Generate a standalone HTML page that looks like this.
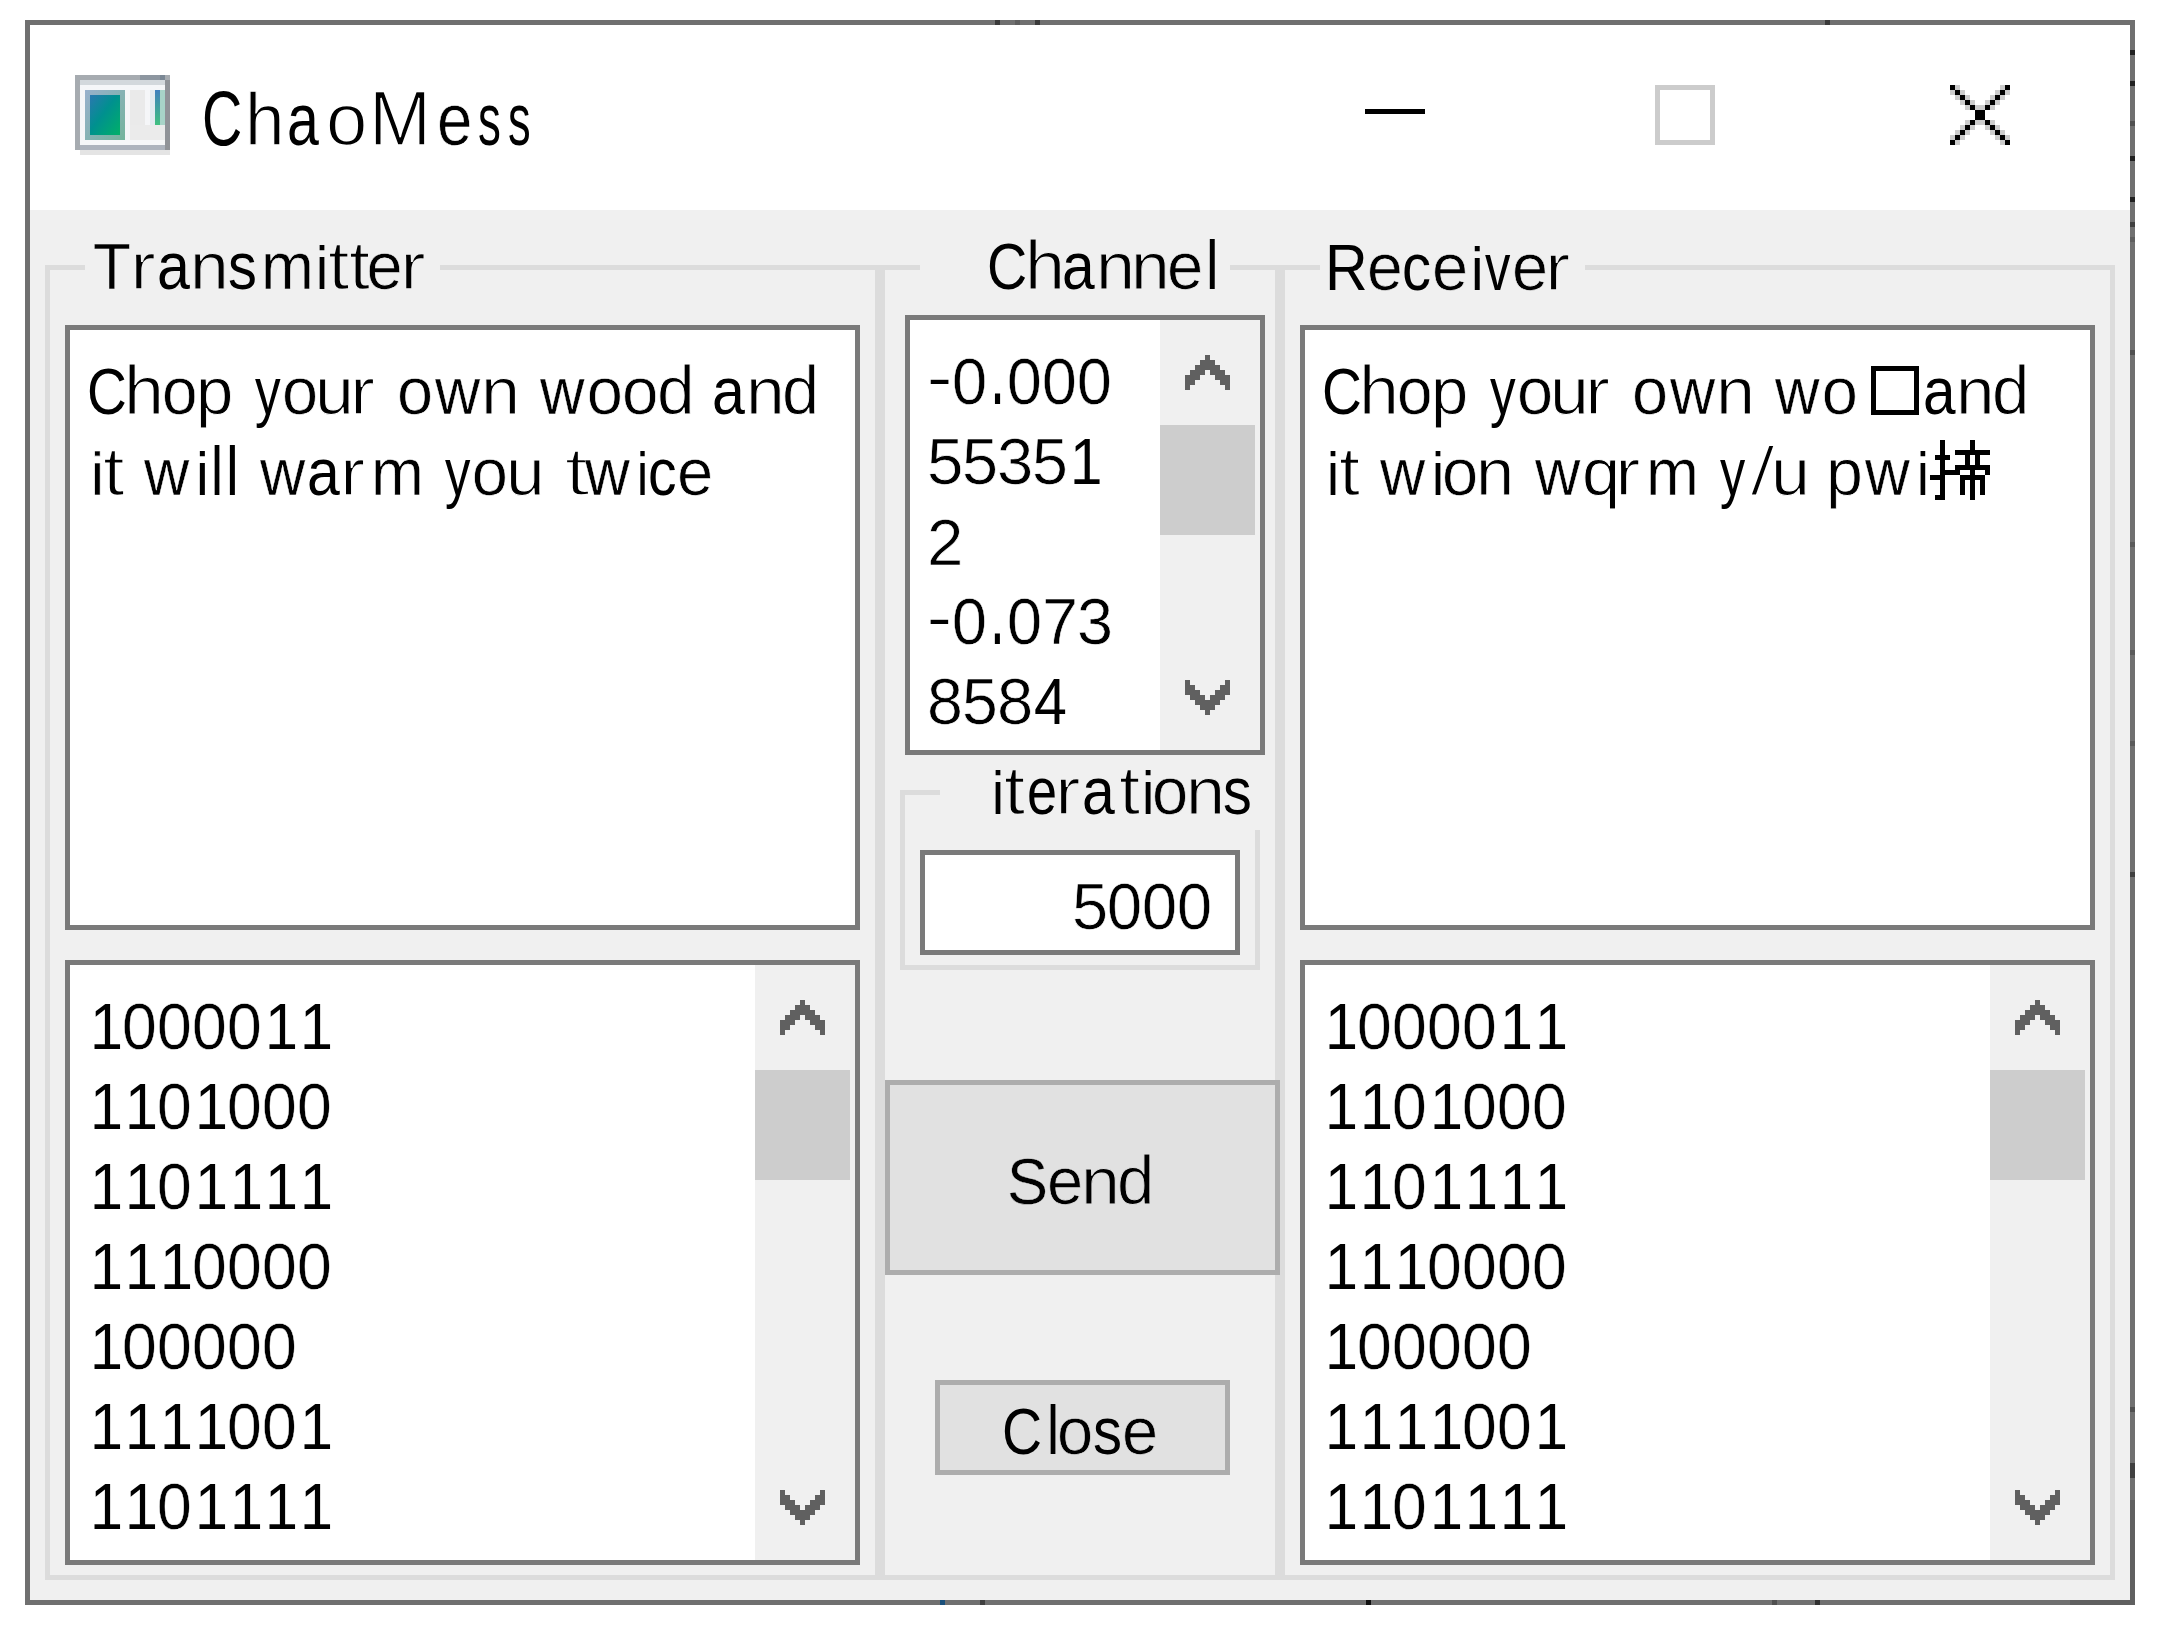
<!DOCTYPE html>
<html><head><meta charset="utf-8"><title>ChaoMess</title><style>
html,body{margin:0;padding:0;width:2159px;height:1626px;overflow:hidden;background:#fff;}
.a{position:absolute;box-sizing:border-box;}
svg.a{display:block}
.t,.g{position:absolute;white-space:pre;line-height:80px;font-family:"Liberation Sans",sans-serif;color:#000;font-style:normal;}
</style></head><body>
<div class="a" style="left:25px;top:20px;width:2110px;height:1585px;border:5px solid #707070;background:#ffffff"></div>
<div class="a" style="left:30px;top:210px;width:2100px;height:1390px;background:#f0f0f0;"></div>
<div class="a" style="left:2130px;top:50px;width:5px;height:5px;background:#202020;"></div>
<div class="a" style="left:2130px;top:81px;width:5px;height:5px;background:#202020;"></div>
<div class="a" style="left:2130px;top:121px;width:5px;height:5px;background:#505050;"></div>
<div class="a" style="left:2130px;top:156px;width:5px;height:5px;background:#202020;"></div>
<div class="a" style="left:2130px;top:197px;width:5px;height:5px;background:#202020;"></div>
<div class="a" style="left:2130px;top:222px;width:5px;height:5px;background:#404040;"></div>
<div class="a" style="left:2130px;top:237px;width:5px;height:5px;background:#5e5e5e;"></div>
<div class="a" style="left:2130px;top:350px;width:5px;height:5px;background:#505050;"></div>
<div class="a" style="left:2130px;top:542px;width:5px;height:5px;background:#5a5a5a;"></div>
<div class="a" style="left:2130px;top:650px;width:5px;height:5px;background:#5a5a5a;"></div>
<div class="a" style="left:2130px;top:741px;width:5px;height:5px;background:#5a5a5a;"></div>
<div class="a" style="left:2130px;top:872px;width:5px;height:5px;background:#404040;"></div>
<div class="a" style="left:2130px;top:1407px;width:5px;height:5px;background:#505050;"></div>
<div class="a" style="left:2130px;top:1463px;width:5px;height:15px;background:#404040;"></div>
<div class="a" style="left:2130px;top:1500px;width:5px;height:105px;background:#606060;"></div>
<div class="a" style="left:2070px;top:1600px;width:65px;height:5px;background:#606060;"></div>
<div class="a" style="left:940px;top:1600px;width:5px;height:5px;background:#1a4f7a;"></div>
<div class="a" style="left:980px;top:1600px;width:5px;height:5px;background:#404040;"></div>
<div class="a" style="left:1366px;top:1600px;width:5px;height:5px;background:#101010;"></div>
<div class="a" style="left:1772px;top:1600px;width:5px;height:5px;background:#505050;"></div>
<div class="a" style="left:1815px;top:1600px;width:5px;height:5px;background:#303030;"></div>
<div class="a" style="left:995px;top:20px;width:5px;height:5px;background:#3a3a3a;"></div>
<div class="a" style="left:1015px;top:20px;width:5px;height:5px;background:#5e5e5e;"></div>
<div class="a" style="left:1035px;top:20px;width:5px;height:5px;background:#3a3a3a;"></div>
<div class="a" style="left:1825px;top:20px;width:5px;height:5px;background:#3a3a3a;"></div>
<div class="a" style="left:1365px;top:109px;width:60px;height:5px;background:#000;"></div>
<div class="a" style="left:1655px;top:85px;width:60px;height:60px;border:5px solid #cccccc;background:transparent"></div>
<svg class="a" style="left:1950px;top:85px" width="60" height="60" viewBox="0 0 12 12" shape-rendering="crispEdges"><rect x="0" y="0" width="1" height="1" fill="#000"/><rect x="1" y="0" width="1" height="1" fill="#cccccc"/><rect x="10" y="0" width="1" height="1" fill="#cccccc"/><rect x="11" y="0" width="1" height="1" fill="#000"/><rect x="0" y="1" width="1" height="1" fill="#cccccc"/><rect x="1" y="1" width="1" height="1" fill="#000"/><rect x="2" y="1" width="1" height="1" fill="#cccccc"/><rect x="9" y="1" width="1" height="1" fill="#cccccc"/><rect x="10" y="1" width="1" height="1" fill="#000"/><rect x="11" y="1" width="1" height="1" fill="#cccccc"/><rect x="1" y="2" width="1" height="1" fill="#cccccc"/><rect x="2" y="2" width="1" height="1" fill="#000"/><rect x="3" y="2" width="1" height="1" fill="#cccccc"/><rect x="8" y="2" width="1" height="1" fill="#cccccc"/><rect x="9" y="2" width="1" height="1" fill="#000"/><rect x="10" y="2" width="1" height="1" fill="#cccccc"/><rect x="2" y="3" width="1" height="1" fill="#cccccc"/><rect x="3" y="3" width="1" height="1" fill="#000"/><rect x="4" y="3" width="1" height="1" fill="#cccccc"/><rect x="7" y="3" width="1" height="1" fill="#cccccc"/><rect x="8" y="3" width="1" height="1" fill="#000"/><rect x="9" y="3" width="1" height="1" fill="#cccccc"/><rect x="3" y="4" width="1" height="1" fill="#cccccc"/><rect x="4" y="4" width="1" height="1" fill="#000"/><rect x="5" y="4" width="2" height="1" fill="#cccccc"/><rect x="7" y="4" width="1" height="1" fill="#000"/><rect x="8" y="4" width="1" height="1" fill="#cccccc"/><rect x="5" y="5" width="2" height="1" fill="#000"/><rect x="5" y="6" width="2" height="1" fill="#000"/><rect x="3" y="7" width="1" height="1" fill="#cccccc"/><rect x="4" y="7" width="1" height="1" fill="#000"/><rect x="5" y="7" width="2" height="1" fill="#cccccc"/><rect x="7" y="7" width="1" height="1" fill="#000"/><rect x="8" y="7" width="1" height="1" fill="#cccccc"/><rect x="2" y="8" width="1" height="1" fill="#cccccc"/><rect x="3" y="8" width="1" height="1" fill="#000"/><rect x="4" y="8" width="1" height="1" fill="#cccccc"/><rect x="7" y="8" width="1" height="1" fill="#cccccc"/><rect x="8" y="8" width="1" height="1" fill="#000"/><rect x="9" y="8" width="1" height="1" fill="#cccccc"/><rect x="1" y="9" width="1" height="1" fill="#cccccc"/><rect x="2" y="9" width="1" height="1" fill="#000"/><rect x="3" y="9" width="1" height="1" fill="#cccccc"/><rect x="8" y="9" width="1" height="1" fill="#cccccc"/><rect x="9" y="9" width="1" height="1" fill="#000"/><rect x="10" y="9" width="1" height="1" fill="#cccccc"/><rect x="0" y="10" width="1" height="1" fill="#cccccc"/><rect x="1" y="10" width="1" height="1" fill="#000"/><rect x="2" y="10" width="1" height="1" fill="#cccccc"/><rect x="9" y="10" width="1" height="1" fill="#cccccc"/><rect x="10" y="10" width="1" height="1" fill="#000"/><rect x="11" y="10" width="1" height="1" fill="#cccccc"/><rect x="0" y="11" width="1" height="1" fill="#000"/><rect x="1" y="11" width="1" height="1" fill="#cccccc"/><rect x="10" y="11" width="1" height="1" fill="#cccccc"/><rect x="11" y="11" width="1" height="1" fill="#000"/></svg>
<div class="a" style="left:45px;top:265px;width:5px;height:1315px;background:#dcdcdc;"></div>
<div class="a" style="left:45px;top:265px;width:40px;height:5px;background:#dcdcdc;"></div>
<div class="a" style="left:440px;top:265px;width:440px;height:5px;background:#dcdcdc;"></div>
<div class="a" style="left:875px;top:265px;width:5px;height:1315px;background:#dcdcdc;"></div>
<div class="a" style="left:45px;top:1575px;width:835px;height:5px;background:#dcdcdc;"></div>
<div class="a" style="left:880px;top:265px;width:5px;height:1315px;background:#dcdcdc;"></div>
<div class="a" style="left:880px;top:265px;width:40px;height:5px;background:#dcdcdc;"></div>
<div class="a" style="left:1230px;top:265px;width:50px;height:5px;background:#dcdcdc;"></div>
<div class="a" style="left:1275px;top:265px;width:5px;height:1315px;background:#dcdcdc;"></div>
<div class="a" style="left:880px;top:1575px;width:400px;height:5px;background:#dcdcdc;"></div>
<div class="a" style="left:1280px;top:265px;width:5px;height:1315px;background:#dcdcdc;"></div>
<div class="a" style="left:1280px;top:265px;width:40px;height:5px;background:#dcdcdc;"></div>
<div class="a" style="left:1585px;top:265px;width:530px;height:5px;background:#dcdcdc;"></div>
<div class="a" style="left:2110px;top:265px;width:5px;height:1315px;background:#dcdcdc;"></div>
<div class="a" style="left:1280px;top:1575px;width:835px;height:5px;background:#dcdcdc;"></div>
<div class="a" style="left:900px;top:790px;width:5px;height:180px;background:#dcdcdc;"></div>
<div class="a" style="left:900px;top:790px;width:40px;height:5px;background:#dcdcdc;"></div>
<div class="a" style="left:1255px;top:830px;width:5px;height:140px;background:#dcdcdc;"></div>
<div class="a" style="left:900px;top:965px;width:360px;height:5px;background:#dcdcdc;"></div>
<div class="a" style="left:65px;top:325px;width:795px;height:605px;border:5px solid #7a7a7a;background:#fff"></div>
<div class="a" style="left:65px;top:960px;width:795px;height:605px;border:5px solid #7a7a7a;background:#fff"></div>
<div class="a" style="left:905px;top:315px;width:360px;height:440px;border:5px solid #7a7a7a;background:#fff"></div>
<div class="a" style="left:920px;top:850px;width:320px;height:105px;border:5px solid #7a7a7a;background:#fff"></div>
<div class="a" style="left:1300px;top:325px;width:795px;height:605px;border:5px solid #7a7a7a;background:#fff"></div>
<div class="a" style="left:1300px;top:960px;width:795px;height:605px;border:5px solid #7a7a7a;background:#fff"></div>
<div class="a" style="left:755px;top:965px;width:100px;height:595px;background:#f0f0f0;"></div>
<div class="a" style="left:755px;top:1070px;width:95px;height:110px;background:#cdcdcd;"></div>
<svg class="a" style="left:780px;top:1000px" width="45" height="35" viewBox="0 0 9 7" shape-rendering="crispEdges"><rect x="4" y="0" width="1" height="1" fill="#606060"/><rect x="3" y="1" width="3" height="1" fill="#606060"/><rect x="2" y="2" width="5" height="1" fill="#606060"/><rect x="1" y="3" width="3" height="1" fill="#606060"/><rect x="5" y="3" width="3" height="1" fill="#606060"/><rect x="0" y="4" width="3" height="1" fill="#606060"/><rect x="6" y="4" width="3" height="1" fill="#606060"/><rect x="0" y="5" width="2" height="1" fill="#606060"/><rect x="7" y="5" width="2" height="1" fill="#606060"/><rect x="0" y="6" width="1" height="1" fill="#606060"/><rect x="8" y="6" width="1" height="1" fill="#606060"/></svg>
<svg class="a" style="left:780px;top:1490px" width="45" height="35" viewBox="0 0 9 7" shape-rendering="crispEdges"><rect x="0" y="0" width="1" height="1" fill="#606060"/><rect x="8" y="0" width="1" height="1" fill="#606060"/><rect x="0" y="1" width="2" height="1" fill="#606060"/><rect x="7" y="1" width="2" height="1" fill="#606060"/><rect x="0" y="2" width="3" height="1" fill="#606060"/><rect x="6" y="2" width="3" height="1" fill="#606060"/><rect x="1" y="3" width="3" height="1" fill="#606060"/><rect x="5" y="3" width="3" height="1" fill="#606060"/><rect x="2" y="4" width="5" height="1" fill="#606060"/><rect x="3" y="5" width="3" height="1" fill="#606060"/><rect x="4" y="6" width="1" height="1" fill="#606060"/></svg>
<div class="a" style="left:1160px;top:320px;width:100px;height:430px;background:#f0f0f0;"></div>
<div class="a" style="left:1160px;top:425px;width:95px;height:110px;background:#cdcdcd;"></div>
<svg class="a" style="left:1185px;top:355px" width="45" height="35" viewBox="0 0 9 7" shape-rendering="crispEdges"><rect x="4" y="0" width="1" height="1" fill="#606060"/><rect x="3" y="1" width="3" height="1" fill="#606060"/><rect x="2" y="2" width="5" height="1" fill="#606060"/><rect x="1" y="3" width="3" height="1" fill="#606060"/><rect x="5" y="3" width="3" height="1" fill="#606060"/><rect x="0" y="4" width="3" height="1" fill="#606060"/><rect x="6" y="4" width="3" height="1" fill="#606060"/><rect x="0" y="5" width="2" height="1" fill="#606060"/><rect x="7" y="5" width="2" height="1" fill="#606060"/><rect x="0" y="6" width="1" height="1" fill="#606060"/><rect x="8" y="6" width="1" height="1" fill="#606060"/></svg>
<svg class="a" style="left:1185px;top:680px" width="45" height="35" viewBox="0 0 9 7" shape-rendering="crispEdges"><rect x="0" y="0" width="1" height="1" fill="#606060"/><rect x="8" y="0" width="1" height="1" fill="#606060"/><rect x="0" y="1" width="2" height="1" fill="#606060"/><rect x="7" y="1" width="2" height="1" fill="#606060"/><rect x="0" y="2" width="3" height="1" fill="#606060"/><rect x="6" y="2" width="3" height="1" fill="#606060"/><rect x="1" y="3" width="3" height="1" fill="#606060"/><rect x="5" y="3" width="3" height="1" fill="#606060"/><rect x="2" y="4" width="5" height="1" fill="#606060"/><rect x="3" y="5" width="3" height="1" fill="#606060"/><rect x="4" y="6" width="1" height="1" fill="#606060"/></svg>
<div class="a" style="left:1990px;top:965px;width:100px;height:595px;background:#f0f0f0;"></div>
<div class="a" style="left:1990px;top:1070px;width:95px;height:110px;background:#cdcdcd;"></div>
<svg class="a" style="left:2015px;top:1000px" width="45" height="35" viewBox="0 0 9 7" shape-rendering="crispEdges"><rect x="4" y="0" width="1" height="1" fill="#606060"/><rect x="3" y="1" width="3" height="1" fill="#606060"/><rect x="2" y="2" width="5" height="1" fill="#606060"/><rect x="1" y="3" width="3" height="1" fill="#606060"/><rect x="5" y="3" width="3" height="1" fill="#606060"/><rect x="0" y="4" width="3" height="1" fill="#606060"/><rect x="6" y="4" width="3" height="1" fill="#606060"/><rect x="0" y="5" width="2" height="1" fill="#606060"/><rect x="7" y="5" width="2" height="1" fill="#606060"/><rect x="0" y="6" width="1" height="1" fill="#606060"/><rect x="8" y="6" width="1" height="1" fill="#606060"/></svg>
<svg class="a" style="left:2015px;top:1490px" width="45" height="35" viewBox="0 0 9 7" shape-rendering="crispEdges"><rect x="0" y="0" width="1" height="1" fill="#606060"/><rect x="8" y="0" width="1" height="1" fill="#606060"/><rect x="0" y="1" width="2" height="1" fill="#606060"/><rect x="7" y="1" width="2" height="1" fill="#606060"/><rect x="0" y="2" width="3" height="1" fill="#606060"/><rect x="6" y="2" width="3" height="1" fill="#606060"/><rect x="1" y="3" width="3" height="1" fill="#606060"/><rect x="5" y="3" width="3" height="1" fill="#606060"/><rect x="2" y="4" width="5" height="1" fill="#606060"/><rect x="3" y="5" width="3" height="1" fill="#606060"/><rect x="4" y="6" width="1" height="1" fill="#606060"/></svg>
<div class="a" style="left:885px;top:1080px;width:395px;height:195px;border:5px solid #adadad;background:#e1e1e1"></div>
<div class="a" style="left:935px;top:1380px;width:295px;height:95px;border:5px solid #adadad;background:#e1e1e1"></div>
<div class="a" style="left:1871px;top:366px;width:48px;height:49px;border:5px solid #000;background:transparent"></div>
<svg class="a" style="left:1920px;top:440px" width="70" height="60" viewBox="0 0 14 12" shape-rendering="crispEdges"><rect x="4" y="0" width="1" height="1" fill="#000"/><rect x="10" y="0" width="1" height="1" fill="#000"/><rect x="4" y="1" width="1" height="1" fill="#000"/><rect x="10" y="1" width="1" height="1" fill="#000"/><rect x="4" y="2" width="1" height="1" fill="#000"/><rect x="7" y="2" width="7" height="1" fill="#000"/><rect x="3" y="3" width="3" height="1" fill="#000"/><rect x="9" y="3" width="1" height="1" fill="#000"/><rect x="11" y="3" width="1" height="1" fill="#000"/><rect x="4" y="4" width="1" height="1" fill="#000"/><rect x="9" y="4" width="1" height="1" fill="#000"/><rect x="11" y="4" width="1" height="1" fill="#000"/><rect x="4" y="5" width="1" height="1" fill="#000"/><rect x="7" y="5" width="7" height="1" fill="#000"/><rect x="4" y="6" width="4" height="1" fill="#000"/><rect x="10" y="6" width="1" height="1" fill="#000"/><rect x="13" y="6" width="1" height="1" fill="#000"/><rect x="2" y="7" width="3" height="1" fill="#000"/><rect x="8" y="7" width="5" height="1" fill="#000"/><rect x="4" y="8" width="1" height="1" fill="#000"/><rect x="8" y="8" width="1" height="1" fill="#000"/><rect x="10" y="8" width="1" height="1" fill="#000"/><rect x="12" y="8" width="1" height="1" fill="#000"/><rect x="4" y="9" width="1" height="1" fill="#000"/><rect x="8" y="9" width="1" height="1" fill="#000"/><rect x="10" y="9" width="1" height="1" fill="#000"/><rect x="12" y="9" width="1" height="1" fill="#000"/><rect x="4" y="10" width="1" height="1" fill="#000"/><rect x="8" y="10" width="1" height="1" fill="#000"/><rect x="10" y="10" width="1" height="1" fill="#000"/><rect x="12" y="10" width="1" height="1" fill="#000"/><rect x="3" y="11" width="2" height="1" fill="#000"/><rect x="10" y="11" width="1" height="1" fill="#000"/></svg>
<svg class="a" style="left:75px;top:75px" width="95" height="80" viewBox="0 0 19 16" shape-rendering="crispEdges">
<defs><linearGradient id="tg" x1="0" y1="0" x2="1" y2="1"><stop offset="0" stop-color="#2a78b0"/><stop offset="0.45" stop-color="#00908f"/><stop offset="1" stop-color="#00b068"/></linearGradient>
<linearGradient id="bg2" x1="0" y1="0" x2="0" y2="1"><stop offset="0" stop-color="#3f80be"/><stop offset="1" stop-color="#40c080"/></linearGradient>
<linearGradient id="tb" x1="0" y1="0" x2="1" y2="1"><stop offset="0" stop-color="#98b0cc"/><stop offset="1" stop-color="#74b49c"/></linearGradient></defs>
<rect x="1" y="15" width="18" height="1" fill="#e4e4e4"/>
<rect x="0" y="0" width="19" height="15" fill="#a6abb0"/>
<rect x="13" y="0" width="5" height="1" fill="#8d96a0"/>
<rect x="17" y="0" width="1" height="1" fill="#7a8794"/>
<rect x="18" y="1" width="1" height="14" fill="#909398"/>
<rect x="1" y="14" width="17" height="1" fill="#adb3bd"/>
<rect x="1" y="1" width="17" height="1" fill="#d3d8dc"/>
<rect x="1" y="2" width="17" height="12" fill="#f5f6f8"/>
<rect x="2" y="3" width="8" height="10" fill="url(#tb)"/>
<rect x="3" y="4" width="6" height="8" fill="url(#tg)"/>
<rect x="11" y="3" width="3" height="10" fill="#eaeaea"/>
<rect x="11" y="10" width="7" height="3" fill="#ebebeb"/>
<rect x="15" y="3" width="1" height="7" fill="#e2ebf0"/>
<rect x="16" y="3" width="1" height="7" fill="url(#bg2)"/>
<rect x="17" y="3" width="1" height="7" fill="#a8d4c8"/>
</svg>

<i class="g" style="left:202.1px;top:82.5px;font-size:64px;transform-origin:0 62.2px;transform:scale(0.870,1.211)">C</i>
<i class="g" style="left:245.3px;top:82.5px;font-size:64px;transform-origin:0 62.2px;transform:scale(1.111,1.159);-webkit-text-stroke:1.08px #fff">h</i>
<i class="g" style="left:287.3px;top:82.5px;font-size:64px;transform-origin:0 62.2px;transform:scale(0.894,1.170)">a</i>
<i class="g" style="left:326.2px;top:82.5px;font-size:64px;transform-origin:0 62.2px;transform:scale(1.160,1.170);-webkit-text-stroke:1.28px #fff">o</i>
<i class="g" style="left:368.9px;top:82.5px;font-size:64px;transform-origin:0 62.2px;transform:scale(1.163,1.211);-webkit-text-stroke:1.29px #fff">M</i>
<i class="g" style="left:436.7px;top:82.5px;font-size:64px;transform-origin:0 62.2px;transform:scale(0.993,1.170);-webkit-text-stroke:0.53px #fff">e</i>
<i class="g" style="left:478.3px;top:82.5px;font-size:64px;transform-origin:0 62.2px;transform:scale(0.714,1.170)">s</i>
<i class="g" style="left:508.3px;top:82.5px;font-size:64px;transform-origin:0 62.2px;transform:scale(0.707,1.170)">s</i>
<i class="g" style="left:93.4px;top:227.3px;font-size:65px;transform-origin:0 62.5px;transform:scale(0.951,0.989);-webkit-text-stroke:0.38px #f0f0f0">T</i>
<i class="g" style="left:129.6px;top:227.3px;font-size:65px;transform-origin:0 62.5px;transform:scale(1.194,1.014);-webkit-text-stroke:1.50px #f0f0f0">r</i>
<i class="g" style="left:156.9px;top:227.3px;font-size:65px;transform-origin:0 62.5px;transform:scale(0.909,1.014)">a</i>
<i class="g" style="left:190.4px;top:227.3px;font-size:65px;transform-origin:0 62.5px;transform:scale(1.071,1.014);-webkit-text-stroke:1.00px #f0f0f0">n</i>
<i class="g" style="left:228.0px;top:227.3px;font-size:65px;transform-origin:0 62.5px;transform:scale(0.889,1.014)">s</i>
<i class="g" style="left:260.7px;top:227.3px;font-size:65px;transform-origin:0 62.5px;transform:scale(0.976,1.014);-webkit-text-stroke:0.52px #f0f0f0">m</i>
<i class="g" style="left:316.3px;top:227.3px;font-size:65px;transform-origin:0 62.5px;transform:scale(0.833,0.947)">i</i>
<i class="g" style="left:328.3px;top:227.3px;font-size:65px;transform-origin:0 62.5px;transform:scale(1.188,1.058);-webkit-text-stroke:1.47px #f0f0f0">t</i>
<i class="g" style="left:348.5px;top:227.3px;font-size:65px;transform-origin:0 62.5px;transform:scale(1.165,1.058);-webkit-text-stroke:1.39px #f0f0f0">t</i>
<i class="g" style="left:366.5px;top:227.3px;font-size:65px;transform-origin:0 62.5px;transform:scale(1.000,1.014);-webkit-text-stroke:0.65px #f0f0f0">e</i>
<i class="g" style="left:399.6px;top:227.3px;font-size:65px;transform-origin:0 62.5px;transform:scale(1.188,1.014);-webkit-text-stroke:1.47px #f0f0f0">r</i>
<i class="g" style="left:987.2px;top:227.4px;font-size:65px;transform-origin:0 62.5px;transform:scale(0.856,0.989)">C</i>
<i class="g" style="left:1024.5px;top:227.4px;font-size:65px;transform-origin:0 62.5px;transform:scale(1.107,1.052);-webkit-text-stroke:1.15px #f0f0f0">h</i>
<i class="g" style="left:1062.4px;top:227.4px;font-size:65px;transform-origin:0 62.5px;transform:scale(0.903,1.014)">a</i>
<i class="g" style="left:1095.5px;top:227.4px;font-size:65px;transform-origin:0 62.5px;transform:scale(1.079,1.014);-webkit-text-stroke:1.03px #f0f0f0">n</i>
<i class="g" style="left:1130.6px;top:227.4px;font-size:65px;transform-origin:0 62.5px;transform:scale(1.071,1.014);-webkit-text-stroke:1.00px #f0f0f0">n</i>
<i class="g" style="left:1166.9px;top:227.4px;font-size:65px;transform-origin:0 62.5px;transform:scale(1.003,1.014);-webkit-text-stroke:0.67px #f0f0f0">e</i>
<i class="g" style="left:1206.4px;top:227.4px;font-size:65px;transform-origin:0 62.5px;transform:scale(0.867,1.052)">l</i>
<i class="g" style="left:1324.9px;top:227.5px;font-size:65px;transform-origin:0 62.5px;transform:scale(0.910,0.989)">R</i>
<i class="g" style="left:1367.2px;top:227.5px;font-size:65px;transform-origin:0 62.5px;transform:scale(0.990,1.014);-webkit-text-stroke:0.60px #f0f0f0">e</i>
<i class="g" style="left:1402.3px;top:227.5px;font-size:65px;transform-origin:0 62.5px;transform:scale(0.893,1.014)">c</i>
<i class="g" style="left:1432.1px;top:227.5px;font-size:65px;transform-origin:0 62.5px;transform:scale(1.000,1.014);-webkit-text-stroke:0.65px #f0f0f0">e</i>
<i class="g" style="left:1471.4px;top:227.5px;font-size:65px;transform-origin:0 62.5px;transform:scale(0.867,0.947)">i</i>
<i class="g" style="left:1485.1px;top:227.5px;font-size:65px;transform-origin:0 62.5px;transform:scale(0.781,1.014)">v</i>
<i class="g" style="left:1512.1px;top:227.5px;font-size:65px;transform-origin:0 62.5px;transform:scale(0.997,1.014);-webkit-text-stroke:0.63px #f0f0f0">e</i>
<i class="g" style="left:1545.3px;top:227.5px;font-size:65px;transform-origin:0 62.5px;transform:scale(1.165,1.014);-webkit-text-stroke:1.39px #f0f0f0">r</i>
<i class="g" style="left:991.6px;top:752.3px;font-size:65px;transform-origin:0 62.5px;transform:scale(0.833,0.947)">i</i>
<i class="g" style="left:1003.8px;top:752.3px;font-size:65px;transform-origin:0 62.5px;transform:scale(1.171,1.058);-webkit-text-stroke:1.41px #f0f0f0">t</i>
<i class="g" style="left:1027.3px;top:752.3px;font-size:65px;transform-origin:0 62.5px;transform:scale(0.833,1.014)">e</i>
<i class="g" style="left:1055.2px;top:752.3px;font-size:65px;transform-origin:0 62.5px;transform:scale(1.176,1.014);-webkit-text-stroke:1.43px #f0f0f0">r</i>
<i class="g" style="left:1082.3px;top:752.3px;font-size:65px;transform-origin:0 62.5px;transform:scale(0.906,1.014)">a</i>
<i class="g" style="left:1118.8px;top:752.3px;font-size:65px;transform-origin:0 62.5px;transform:scale(1.176,1.058);-webkit-text-stroke:1.43px #f0f0f0">t</i>
<i class="g" style="left:1141.5px;top:752.3px;font-size:65px;transform-origin:0 62.5px;transform:scale(0.850,0.947)">i</i>
<i class="g" style="left:1152.0px;top:752.3px;font-size:65px;transform-origin:0 62.5px;transform:scale(1.000,1.014);-webkit-text-stroke:0.65px #f0f0f0">o</i>
<i class="g" style="left:1185.5px;top:752.3px;font-size:65px;transform-origin:0 62.5px;transform:scale(1.079,1.014);-webkit-text-stroke:1.03px #f0f0f0">n</i>
<i class="g" style="left:1223.3px;top:752.3px;font-size:65px;transform-origin:0 62.5px;transform:scale(0.886,1.014)">s</i>
<i class="g" style="left:1007.2px;top:1142.3px;font-size:65px;transform-origin:0 62.5px;transform:scale(0.946,0.989);-webkit-text-stroke:0.35px #e1e1e1">S</i>
<i class="g" style="left:1047.0px;top:1142.3px;font-size:65px;transform-origin:0 62.5px;transform:scale(1.000,1.014);-webkit-text-stroke:0.65px #e1e1e1">e</i>
<i class="g" style="left:1080.7px;top:1142.3px;font-size:65px;transform-origin:0 62.5px;transform:scale(1.075,1.014);-webkit-text-stroke:1.01px #e1e1e1">n</i>
<i class="g" style="left:1116.9px;top:1142.3px;font-size:65px;transform-origin:0 62.5px;transform:scale(1.034,1.052);-webkit-text-stroke:0.82px #e1e1e1">d</i>
<i class="g" style="left:1002.4px;top:1392.3px;font-size:65px;transform-origin:0 62.5px;transform:scale(0.854,0.989)">C</i>
<i class="g" style="left:1046.7px;top:1392.3px;font-size:65px;transform-origin:0 62.5px;transform:scale(0.833,1.052)">l</i>
<i class="g" style="left:1057.0px;top:1392.3px;font-size:65px;transform-origin:0 62.5px;transform:scale(1.000,1.014);-webkit-text-stroke:0.65px #e1e1e1">o</i>
<i class="g" style="left:1093.2px;top:1392.3px;font-size:65px;transform-origin:0 62.5px;transform:scale(0.893,1.014)">s</i>
<i class="g" style="left:1122.0px;top:1392.3px;font-size:65px;transform-origin:0 62.5px;transform:scale(1.000,1.014);-webkit-text-stroke:0.65px #e1e1e1">e</i>
<i class="g" style="left:925.9px;top:342.3px;font-size:65px;transform-origin:0 62.5px;transform:scale(1.256,1.250);-webkit-text-stroke:1.71px #fff">-</i>
<i class="g" style="left:952.0px;top:342.3px;font-size:65px;transform-origin:0 62.5px;transform:scale(0.971,0.989);-webkit-text-stroke:0.49px #fff">0</i>
<i class="g" style="left:989.8px;top:342.3px;font-size:65px;transform-origin:0 62.5px;transform:scale(0.833,1.500)">.</i>
<i class="g" style="left:1007.1px;top:342.3px;font-size:65px;transform-origin:0 62.5px;transform:scale(0.961,0.989);-webkit-text-stroke:0.44px #fff">0</i>
<i class="g" style="left:1042.0px;top:342.3px;font-size:65px;transform-origin:0 62.5px;transform:scale(0.961,0.989);-webkit-text-stroke:0.44px #fff">0</i>
<i class="g" style="left:1077.2px;top:342.3px;font-size:65px;transform-origin:0 62.5px;transform:scale(0.961,0.989);-webkit-text-stroke:0.44px #fff">0</i>
<i class="g" style="left:926.7px;top:422.4px;font-size:65px;transform-origin:0 62.5px;transform:scale(1.007,0.989);-webkit-text-stroke:0.68px #fff">5</i>
<i class="g" style="left:961.9px;top:422.4px;font-size:65px;transform-origin:0 62.5px;transform:scale(0.997,0.989);-webkit-text-stroke:0.63px #fff">5</i>
<i class="g" style="left:996.8px;top:422.4px;font-size:65px;transform-origin:0 62.5px;transform:scale(1.003,0.989);-webkit-text-stroke:0.67px #fff">3</i>
<i class="g" style="left:1032.0px;top:422.4px;font-size:65px;transform-origin:0 62.5px;transform:scale(0.993,0.989);-webkit-text-stroke:0.62px #fff">5</i>
<i class="g" style="left:1070.4px;top:422.4px;font-size:65px;transform-origin:0 62.5px;transform:scale(0.896,0.989)">1</i>
<i class="g" style="left:926.7px;top:502.5px;font-size:65px;transform-origin:0 62.5px;transform:scale(1.007,0.989);-webkit-text-stroke:0.68px #fff">2</i>
<i class="g" style="left:926.3px;top:582.3px;font-size:65px;transform-origin:0 62.5px;transform:scale(1.237,1.250);-webkit-text-stroke:1.65px #fff">-</i>
<i class="g" style="left:952.0px;top:582.3px;font-size:65px;transform-origin:0 62.5px;transform:scale(0.965,0.989);-webkit-text-stroke:0.46px #fff">0</i>
<i class="g" style="left:990.1px;top:582.3px;font-size:65px;transform-origin:0 62.5px;transform:scale(0.817,1.500)">.</i>
<i class="g" style="left:1007.1px;top:582.3px;font-size:65px;transform-origin:0 62.5px;transform:scale(0.968,0.989);-webkit-text-stroke:0.48px #fff">0</i>
<i class="g" style="left:1042.0px;top:582.3px;font-size:65px;transform-origin:0 62.5px;transform:scale(0.997,0.989);-webkit-text-stroke:0.63px #fff">7</i>
<i class="g" style="left:1077.0px;top:582.3px;font-size:65px;transform-origin:0 62.5px;transform:scale(0.997,0.989);-webkit-text-stroke:0.63px #fff">3</i>
<i class="g" style="left:927.0px;top:662.3px;font-size:65px;transform-origin:0 62.5px;transform:scale(0.993,0.989);-webkit-text-stroke:0.62px #fff">8</i>
<i class="g" style="left:962.1px;top:662.3px;font-size:65px;transform-origin:0 62.5px;transform:scale(0.990,0.989);-webkit-text-stroke:0.60px #fff">5</i>
<i class="g" style="left:996.9px;top:662.3px;font-size:65px;transform-origin:0 62.5px;transform:scale(1.003,0.989);-webkit-text-stroke:0.67px #fff">8</i>
<i class="g" style="left:1034.1px;top:662.3px;font-size:65px;transform-origin:0 62.5px;transform:scale(0.909,0.989)">4</i>
<i class="g" style="left:1072.0px;top:867.4px;font-size:65px;transform-origin:0 62.5px;transform:scale(1.000,0.989);-webkit-text-stroke:0.65px #fff">5</i>
<i class="g" style="left:1107.1px;top:867.4px;font-size:65px;transform-origin:0 62.5px;transform:scale(0.968,0.989);-webkit-text-stroke:0.48px #fff">0</i>
<i class="g" style="left:1142.1px;top:867.4px;font-size:65px;transform-origin:0 62.5px;transform:scale(0.968,0.989);-webkit-text-stroke:0.48px #fff">0</i>
<i class="g" style="left:1177.1px;top:867.4px;font-size:65px;transform-origin:0 62.5px;transform:scale(0.968,0.989);-webkit-text-stroke:0.48px #fff">0</i>
<i class="g" style="left:87.2px;top:352.3px;font-size:65px;transform-origin:0 62.5px;transform:scale(0.849,0.989)">C</i>
<i class="g" style="left:124.3px;top:352.3px;font-size:65px;transform-origin:0 62.5px;transform:scale(1.107,1.052);-webkit-text-stroke:1.15px #fff">h</i>
<i class="g" style="left:162.1px;top:352.3px;font-size:65px;transform-origin:0 62.5px;transform:scale(0.980,1.014);-webkit-text-stroke:0.54px #fff">o</i>
<i class="g" style="left:195.6px;top:352.3px;font-size:65px;transform-origin:0 62.5px;transform:scale(1.031,1.014);-webkit-text-stroke:0.81px #fff">p</i>
<i class="g" style="left:254.6px;top:352.3px;font-size:65px;transform-origin:0 62.5px;transform:scale(0.788,1.014)">y</i>
<i class="g" style="left:281.7px;top:352.3px;font-size:65px;transform-origin:0 62.5px;transform:scale(0.997,1.014);-webkit-text-stroke:0.63px #fff">o</i>
<i class="g" style="left:315.4px;top:352.3px;font-size:65px;transform-origin:0 62.5px;transform:scale(1.075,1.014);-webkit-text-stroke:1.01px #fff">u</i>
<i class="g" style="left:350.3px;top:352.3px;font-size:65px;transform-origin:0 62.5px;transform:scale(1.153,1.014);-webkit-text-stroke:1.34px #fff">r</i>
<i class="g" style="left:396.5px;top:352.3px;font-size:65px;transform-origin:0 62.5px;transform:scale(0.997,1.014);-webkit-text-stroke:0.63px #fff">o</i>
<i class="g" style="left:434.6px;top:352.3px;font-size:65px;transform-origin:0 62.5px;transform:scale(0.962,1.014);-webkit-text-stroke:0.44px #fff">w</i>
<i class="g" style="left:480.5px;top:352.3px;font-size:65px;transform-origin:0 62.5px;transform:scale(1.079,1.014);-webkit-text-stroke:1.03px #fff">n</i>
<i class="g" style="left:540.0px;top:352.3px;font-size:65px;transform-origin:0 62.5px;transform:scale(0.947,1.014);-webkit-text-stroke:0.36px #fff">w</i>
<i class="g" style="left:586.7px;top:352.3px;font-size:65px;transform-origin:0 62.5px;transform:scale(1.000,1.014);-webkit-text-stroke:0.65px #fff">o</i>
<i class="g" style="left:621.7px;top:352.3px;font-size:65px;transform-origin:0 62.5px;transform:scale(1.007,1.014);-webkit-text-stroke:0.68px #fff">o</i>
<i class="g" style="left:656.8px;top:352.3px;font-size:65px;transform-origin:0 62.5px;transform:scale(1.041,1.052);-webkit-text-stroke:0.86px #fff">d</i>
<i class="g" style="left:712.1px;top:352.3px;font-size:65px;transform-origin:0 62.5px;transform:scale(0.909,1.014)">a</i>
<i class="g" style="left:745.7px;top:352.3px;font-size:65px;transform-origin:0 62.5px;transform:scale(1.071,1.014);-webkit-text-stroke:1.00px #fff">n</i>
<i class="g" style="left:781.9px;top:352.3px;font-size:65px;transform-origin:0 62.5px;transform:scale(1.028,1.052);-webkit-text-stroke:0.79px #fff">d</i>
<i class="g" style="left:90.0px;top:432.5px;font-size:65px;transform-origin:0 62.5px;transform:scale(1.017,0.947);-webkit-text-stroke:0.74px #fff">i</i>
<i class="g" style="left:103.4px;top:432.5px;font-size:65px;transform-origin:0 62.5px;transform:scale(1.194,1.058);-webkit-text-stroke:1.50px #fff">t</i>
<i class="g" style="left:144.2px;top:432.5px;font-size:65px;transform-origin:0 62.5px;transform:scale(0.964,1.014);-webkit-text-stroke:0.45px #fff">w</i>
<i class="g" style="left:196.2px;top:432.5px;font-size:65px;transform-origin:0 62.5px;transform:scale(0.883,0.947)">i</i>
<i class="g" style="left:211.3px;top:432.5px;font-size:65px;transform-origin:0 62.5px;transform:scale(0.833,1.052)">l</i>
<i class="g" style="left:226.1px;top:432.5px;font-size:65px;transform-origin:0 62.5px;transform:scale(0.883,1.052)">l</i>
<i class="g" style="left:259.5px;top:432.5px;font-size:65px;transform-origin:0 62.5px;transform:scale(0.964,1.014);-webkit-text-stroke:0.45px #fff">w</i>
<i class="g" style="left:307.0px;top:432.5px;font-size:65px;transform-origin:0 62.5px;transform:scale(0.906,1.014)">a</i>
<i class="g" style="left:340.3px;top:432.5px;font-size:65px;transform-origin:0 62.5px;transform:scale(1.159,1.014);-webkit-text-stroke:1.36px #fff">r</i>
<i class="g" style="left:370.9px;top:432.5px;font-size:65px;transform-origin:0 62.5px;transform:scale(0.976,1.014);-webkit-text-stroke:0.52px #fff">m</i>
<i class="g" style="left:444.6px;top:432.5px;font-size:65px;transform-origin:0 62.5px;transform:scale(0.781,1.014)">y</i>
<i class="g" style="left:471.8px;top:432.5px;font-size:65px;transform-origin:0 62.5px;transform:scale(1.000,1.014);-webkit-text-stroke:0.65px #fff">o</i>
<i class="g" style="left:505.7px;top:432.5px;font-size:65px;transform-origin:0 62.5px;transform:scale(1.071,1.014);-webkit-text-stroke:1.00px #fff">u</i>
<i class="g" style="left:563.5px;top:432.5px;font-size:65px;transform-origin:0 62.5px;transform:scale(1.453,1.058);-webkit-text-stroke:2.27px #fff">t</i>
<i class="g" style="left:584.7px;top:432.5px;font-size:65px;transform-origin:0 62.5px;transform:scale(0.953,1.014);-webkit-text-stroke:0.39px #fff">w</i>
<i class="g" style="left:637.0px;top:432.5px;font-size:65px;transform-origin:0 62.5px;transform:scale(0.767,0.947)">i</i>
<i class="g" style="left:647.7px;top:432.5px;font-size:65px;transform-origin:0 62.5px;transform:scale(0.879,1.014)">c</i>
<i class="g" style="left:677.0px;top:432.5px;font-size:65px;transform-origin:0 62.5px;transform:scale(1.003,1.014);-webkit-text-stroke:0.67px #fff">e</i>
<i class="g" style="left:1322.2px;top:352.3px;font-size:65px;transform-origin:0 62.5px;transform:scale(0.849,0.989)">C</i>
<i class="g" style="left:1359.3px;top:352.3px;font-size:65px;transform-origin:0 62.5px;transform:scale(1.107,1.052);-webkit-text-stroke:1.15px #fff">h</i>
<i class="g" style="left:1397.1px;top:352.3px;font-size:65px;transform-origin:0 62.5px;transform:scale(0.980,1.014);-webkit-text-stroke:0.54px #fff">o</i>
<i class="g" style="left:1430.6px;top:352.3px;font-size:65px;transform-origin:0 62.5px;transform:scale(1.031,1.014);-webkit-text-stroke:0.81px #fff">p</i>
<i class="g" style="left:1489.6px;top:352.3px;font-size:65px;transform-origin:0 62.5px;transform:scale(0.788,1.014)">y</i>
<i class="g" style="left:1516.7px;top:352.3px;font-size:65px;transform-origin:0 62.5px;transform:scale(0.997,1.014);-webkit-text-stroke:0.63px #fff">o</i>
<i class="g" style="left:1550.4px;top:352.3px;font-size:65px;transform-origin:0 62.5px;transform:scale(1.075,1.014);-webkit-text-stroke:1.01px #fff">u</i>
<i class="g" style="left:1585.3px;top:352.3px;font-size:65px;transform-origin:0 62.5px;transform:scale(1.153,1.014);-webkit-text-stroke:1.34px #fff">r</i>
<i class="g" style="left:1631.5px;top:352.3px;font-size:65px;transform-origin:0 62.5px;transform:scale(0.997,1.014);-webkit-text-stroke:0.63px #fff">o</i>
<i class="g" style="left:1669.6px;top:352.3px;font-size:65px;transform-origin:0 62.5px;transform:scale(0.962,1.014);-webkit-text-stroke:0.44px #fff">w</i>
<i class="g" style="left:1715.5px;top:352.3px;font-size:65px;transform-origin:0 62.5px;transform:scale(1.079,1.014);-webkit-text-stroke:1.03px #fff">n</i>
<i class="g" style="left:1775.0px;top:352.3px;font-size:65px;transform-origin:0 62.5px;transform:scale(0.947,1.014);-webkit-text-stroke:0.36px #fff">w</i>
<i class="g" style="left:1821.7px;top:352.3px;font-size:65px;transform-origin:0 62.5px;transform:scale(1.000,1.014);-webkit-text-stroke:0.65px #fff">o</i>
<i class="g" style="left:1922.6px;top:352.3px;font-size:65px;transform-origin:0 62.5px;transform:scale(0.900,1.014)">a</i>
<i class="g" style="left:1955.7px;top:352.3px;font-size:65px;transform-origin:0 62.5px;transform:scale(1.064,1.014);-webkit-text-stroke:0.96px #fff">n</i>
<i class="g" style="left:1992.3px;top:352.3px;font-size:65px;transform-origin:0 62.5px;transform:scale(1.034,1.052);-webkit-text-stroke:0.82px #fff">d</i>
<i class="g" style="left:1326.5px;top:432.5px;font-size:65px;transform-origin:0 62.5px;transform:scale(0.833,0.947)">i</i>
<i class="g" style="left:1338.8px;top:432.5px;font-size:65px;transform-origin:0 62.5px;transform:scale(1.165,1.058);-webkit-text-stroke:1.39px #fff">t</i>
<i class="g" style="left:1379.8px;top:432.5px;font-size:65px;transform-origin:0 62.5px;transform:scale(0.962,1.014);-webkit-text-stroke:0.44px #fff">w</i>
<i class="g" style="left:1431.6px;top:432.5px;font-size:65px;transform-origin:0 62.5px;transform:scale(0.833,0.947)">i</i>
<i class="g" style="left:1442.1px;top:432.5px;font-size:65px;transform-origin:0 62.5px;transform:scale(1.000,1.014);-webkit-text-stroke:0.65px #fff">o</i>
<i class="g" style="left:1476.1px;top:432.5px;font-size:65px;transform-origin:0 62.5px;transform:scale(1.057,1.014);-webkit-text-stroke:0.93px #fff">n</i>
<i class="g" style="left:1534.9px;top:432.5px;font-size:65px;transform-origin:0 62.5px;transform:scale(0.966,1.014);-webkit-text-stroke:0.47px #fff">w</i>
<i class="g" style="left:1581.7px;top:432.5px;font-size:65px;transform-origin:0 62.5px;transform:scale(1.055,1.014);-webkit-text-stroke:0.92px #fff">q</i>
<i class="g" style="left:1615.4px;top:432.5px;font-size:65px;transform-origin:0 62.5px;transform:scale(1.171,1.014);-webkit-text-stroke:1.41px #fff">r</i>
<i class="g" style="left:1646.3px;top:432.5px;font-size:65px;transform-origin:0 62.5px;transform:scale(0.978,1.014);-webkit-text-stroke:0.53px #fff">m</i>
<i class="g" style="left:1720.1px;top:432.5px;font-size:65px;transform-origin:0 62.5px;transform:scale(0.775,1.014)">y</i>
<i class="g" style="left:1750.0px;top:432.5px;font-size:65px;transform-origin:0 62.5px;transform:scale(1.389,1.052);-webkit-text-stroke:2.11px #fff">/</i>
<i class="g" style="left:1770.7px;top:432.5px;font-size:65px;transform-origin:0 62.5px;transform:scale(1.079,1.014);-webkit-text-stroke:1.03px #fff">u</i>
<i class="g" style="left:1826.1px;top:432.5px;font-size:65px;transform-origin:0 62.5px;transform:scale(1.021,1.014);-webkit-text-stroke:0.76px #fff">p</i>
<i class="g" style="left:1865.3px;top:432.5px;font-size:65px;transform-origin:0 62.5px;transform:scale(0.953,1.014);-webkit-text-stroke:0.39px #fff">w</i>
<i class="g" style="left:1916.9px;top:432.5px;font-size:65px;transform-origin:0 62.5px;transform:scale(0.817,0.947)">i</i>
<i class="g" style="left:89.6px;top:987.3px;font-size:65px;transform-origin:0 62.5px;transform:scale(0.911,0.989)">1</i>
<i class="g" style="left:121.8px;top:987.3px;font-size:65px;transform-origin:0 62.5px;transform:scale(0.961,0.989);-webkit-text-stroke:0.44px #fff">0</i>
<i class="g" style="left:156.8px;top:987.3px;font-size:65px;transform-origin:0 62.5px;transform:scale(0.961,0.989);-webkit-text-stroke:0.44px #fff">0</i>
<i class="g" style="left:191.8px;top:987.3px;font-size:65px;transform-origin:0 62.5px;transform:scale(0.961,0.989);-webkit-text-stroke:0.44px #fff">0</i>
<i class="g" style="left:226.8px;top:987.3px;font-size:65px;transform-origin:0 62.5px;transform:scale(0.961,0.989);-webkit-text-stroke:0.44px #fff">0</i>
<i class="g" style="left:264.6px;top:987.3px;font-size:65px;transform-origin:0 62.5px;transform:scale(0.911,0.989)">1</i>
<i class="g" style="left:299.6px;top:987.3px;font-size:65px;transform-origin:0 62.5px;transform:scale(0.911,0.989)">1</i>
<i class="g" style="left:1325.2px;top:987.3px;font-size:65px;transform-origin:0 62.5px;transform:scale(0.911,0.989)">1</i>
<i class="g" style="left:1357.4px;top:987.3px;font-size:65px;transform-origin:0 62.5px;transform:scale(0.961,0.989);-webkit-text-stroke:0.44px #fff">0</i>
<i class="g" style="left:1392.4px;top:987.3px;font-size:65px;transform-origin:0 62.5px;transform:scale(0.961,0.989);-webkit-text-stroke:0.44px #fff">0</i>
<i class="g" style="left:1427.4px;top:987.3px;font-size:65px;transform-origin:0 62.5px;transform:scale(0.961,0.989);-webkit-text-stroke:0.44px #fff">0</i>
<i class="g" style="left:1462.4px;top:987.3px;font-size:65px;transform-origin:0 62.5px;transform:scale(0.961,0.989);-webkit-text-stroke:0.44px #fff">0</i>
<i class="g" style="left:1500.2px;top:987.3px;font-size:65px;transform-origin:0 62.5px;transform:scale(0.911,0.989)">1</i>
<i class="g" style="left:1535.2px;top:987.3px;font-size:65px;transform-origin:0 62.5px;transform:scale(0.911,0.989)">1</i>
<i class="g" style="left:89.6px;top:1067.3px;font-size:65px;transform-origin:0 62.5px;transform:scale(0.911,0.989)">1</i>
<i class="g" style="left:124.6px;top:1067.3px;font-size:65px;transform-origin:0 62.5px;transform:scale(0.911,0.989)">1</i>
<i class="g" style="left:156.8px;top:1067.3px;font-size:65px;transform-origin:0 62.5px;transform:scale(0.961,0.989);-webkit-text-stroke:0.44px #fff">0</i>
<i class="g" style="left:194.6px;top:1067.3px;font-size:65px;transform-origin:0 62.5px;transform:scale(0.911,0.989)">1</i>
<i class="g" style="left:226.8px;top:1067.3px;font-size:65px;transform-origin:0 62.5px;transform:scale(0.961,0.989);-webkit-text-stroke:0.44px #fff">0</i>
<i class="g" style="left:261.8px;top:1067.3px;font-size:65px;transform-origin:0 62.5px;transform:scale(0.961,0.989);-webkit-text-stroke:0.44px #fff">0</i>
<i class="g" style="left:296.8px;top:1067.3px;font-size:65px;transform-origin:0 62.5px;transform:scale(0.961,0.989);-webkit-text-stroke:0.44px #fff">0</i>
<i class="g" style="left:1325.2px;top:1067.3px;font-size:65px;transform-origin:0 62.5px;transform:scale(0.911,0.989)">1</i>
<i class="g" style="left:1360.2px;top:1067.3px;font-size:65px;transform-origin:0 62.5px;transform:scale(0.911,0.989)">1</i>
<i class="g" style="left:1392.4px;top:1067.3px;font-size:65px;transform-origin:0 62.5px;transform:scale(0.961,0.989);-webkit-text-stroke:0.44px #fff">0</i>
<i class="g" style="left:1430.2px;top:1067.3px;font-size:65px;transform-origin:0 62.5px;transform:scale(0.911,0.989)">1</i>
<i class="g" style="left:1462.4px;top:1067.3px;font-size:65px;transform-origin:0 62.5px;transform:scale(0.961,0.989);-webkit-text-stroke:0.44px #fff">0</i>
<i class="g" style="left:1497.4px;top:1067.3px;font-size:65px;transform-origin:0 62.5px;transform:scale(0.961,0.989);-webkit-text-stroke:0.44px #fff">0</i>
<i class="g" style="left:1532.4px;top:1067.3px;font-size:65px;transform-origin:0 62.5px;transform:scale(0.961,0.989);-webkit-text-stroke:0.44px #fff">0</i>
<i class="g" style="left:89.6px;top:1147.3px;font-size:65px;transform-origin:0 62.5px;transform:scale(0.911,0.989)">1</i>
<i class="g" style="left:124.6px;top:1147.3px;font-size:65px;transform-origin:0 62.5px;transform:scale(0.911,0.989)">1</i>
<i class="g" style="left:156.8px;top:1147.3px;font-size:65px;transform-origin:0 62.5px;transform:scale(0.961,0.989);-webkit-text-stroke:0.44px #fff">0</i>
<i class="g" style="left:194.6px;top:1147.3px;font-size:65px;transform-origin:0 62.5px;transform:scale(0.911,0.989)">1</i>
<i class="g" style="left:229.6px;top:1147.3px;font-size:65px;transform-origin:0 62.5px;transform:scale(0.911,0.989)">1</i>
<i class="g" style="left:264.6px;top:1147.3px;font-size:65px;transform-origin:0 62.5px;transform:scale(0.911,0.989)">1</i>
<i class="g" style="left:299.6px;top:1147.3px;font-size:65px;transform-origin:0 62.5px;transform:scale(0.911,0.989)">1</i>
<i class="g" style="left:1325.2px;top:1147.3px;font-size:65px;transform-origin:0 62.5px;transform:scale(0.911,0.989)">1</i>
<i class="g" style="left:1360.2px;top:1147.3px;font-size:65px;transform-origin:0 62.5px;transform:scale(0.911,0.989)">1</i>
<i class="g" style="left:1392.4px;top:1147.3px;font-size:65px;transform-origin:0 62.5px;transform:scale(0.961,0.989);-webkit-text-stroke:0.44px #fff">0</i>
<i class="g" style="left:1430.2px;top:1147.3px;font-size:65px;transform-origin:0 62.5px;transform:scale(0.911,0.989)">1</i>
<i class="g" style="left:1465.2px;top:1147.3px;font-size:65px;transform-origin:0 62.5px;transform:scale(0.911,0.989)">1</i>
<i class="g" style="left:1500.2px;top:1147.3px;font-size:65px;transform-origin:0 62.5px;transform:scale(0.911,0.989)">1</i>
<i class="g" style="left:1535.2px;top:1147.3px;font-size:65px;transform-origin:0 62.5px;transform:scale(0.911,0.989)">1</i>
<i class="g" style="left:89.6px;top:1227.3px;font-size:65px;transform-origin:0 62.5px;transform:scale(0.911,0.989)">1</i>
<i class="g" style="left:124.6px;top:1227.3px;font-size:65px;transform-origin:0 62.5px;transform:scale(0.911,0.989)">1</i>
<i class="g" style="left:159.6px;top:1227.3px;font-size:65px;transform-origin:0 62.5px;transform:scale(0.911,0.989)">1</i>
<i class="g" style="left:191.8px;top:1227.3px;font-size:65px;transform-origin:0 62.5px;transform:scale(0.961,0.989);-webkit-text-stroke:0.44px #fff">0</i>
<i class="g" style="left:226.8px;top:1227.3px;font-size:65px;transform-origin:0 62.5px;transform:scale(0.961,0.989);-webkit-text-stroke:0.44px #fff">0</i>
<i class="g" style="left:261.8px;top:1227.3px;font-size:65px;transform-origin:0 62.5px;transform:scale(0.961,0.989);-webkit-text-stroke:0.44px #fff">0</i>
<i class="g" style="left:296.8px;top:1227.3px;font-size:65px;transform-origin:0 62.5px;transform:scale(0.961,0.989);-webkit-text-stroke:0.44px #fff">0</i>
<i class="g" style="left:1325.2px;top:1227.3px;font-size:65px;transform-origin:0 62.5px;transform:scale(0.911,0.989)">1</i>
<i class="g" style="left:1360.2px;top:1227.3px;font-size:65px;transform-origin:0 62.5px;transform:scale(0.911,0.989)">1</i>
<i class="g" style="left:1395.2px;top:1227.3px;font-size:65px;transform-origin:0 62.5px;transform:scale(0.911,0.989)">1</i>
<i class="g" style="left:1427.4px;top:1227.3px;font-size:65px;transform-origin:0 62.5px;transform:scale(0.961,0.989);-webkit-text-stroke:0.44px #fff">0</i>
<i class="g" style="left:1462.4px;top:1227.3px;font-size:65px;transform-origin:0 62.5px;transform:scale(0.961,0.989);-webkit-text-stroke:0.44px #fff">0</i>
<i class="g" style="left:1497.4px;top:1227.3px;font-size:65px;transform-origin:0 62.5px;transform:scale(0.961,0.989);-webkit-text-stroke:0.44px #fff">0</i>
<i class="g" style="left:1532.4px;top:1227.3px;font-size:65px;transform-origin:0 62.5px;transform:scale(0.961,0.989);-webkit-text-stroke:0.44px #fff">0</i>
<i class="g" style="left:89.6px;top:1307.3px;font-size:65px;transform-origin:0 62.5px;transform:scale(0.911,0.989)">1</i>
<i class="g" style="left:121.8px;top:1307.3px;font-size:65px;transform-origin:0 62.5px;transform:scale(0.961,0.989);-webkit-text-stroke:0.44px #fff">0</i>
<i class="g" style="left:156.8px;top:1307.3px;font-size:65px;transform-origin:0 62.5px;transform:scale(0.961,0.989);-webkit-text-stroke:0.44px #fff">0</i>
<i class="g" style="left:191.8px;top:1307.3px;font-size:65px;transform-origin:0 62.5px;transform:scale(0.961,0.989);-webkit-text-stroke:0.44px #fff">0</i>
<i class="g" style="left:226.8px;top:1307.3px;font-size:65px;transform-origin:0 62.5px;transform:scale(0.961,0.989);-webkit-text-stroke:0.44px #fff">0</i>
<i class="g" style="left:261.8px;top:1307.3px;font-size:65px;transform-origin:0 62.5px;transform:scale(0.961,0.989);-webkit-text-stroke:0.44px #fff">0</i>
<i class="g" style="left:1325.2px;top:1307.3px;font-size:65px;transform-origin:0 62.5px;transform:scale(0.911,0.989)">1</i>
<i class="g" style="left:1357.4px;top:1307.3px;font-size:65px;transform-origin:0 62.5px;transform:scale(0.961,0.989);-webkit-text-stroke:0.44px #fff">0</i>
<i class="g" style="left:1392.4px;top:1307.3px;font-size:65px;transform-origin:0 62.5px;transform:scale(0.961,0.989);-webkit-text-stroke:0.44px #fff">0</i>
<i class="g" style="left:1427.4px;top:1307.3px;font-size:65px;transform-origin:0 62.5px;transform:scale(0.961,0.989);-webkit-text-stroke:0.44px #fff">0</i>
<i class="g" style="left:1462.4px;top:1307.3px;font-size:65px;transform-origin:0 62.5px;transform:scale(0.961,0.989);-webkit-text-stroke:0.44px #fff">0</i>
<i class="g" style="left:1497.4px;top:1307.3px;font-size:65px;transform-origin:0 62.5px;transform:scale(0.961,0.989);-webkit-text-stroke:0.44px #fff">0</i>
<i class="g" style="left:89.6px;top:1387.3px;font-size:65px;transform-origin:0 62.5px;transform:scale(0.911,0.989)">1</i>
<i class="g" style="left:124.6px;top:1387.3px;font-size:65px;transform-origin:0 62.5px;transform:scale(0.911,0.989)">1</i>
<i class="g" style="left:159.6px;top:1387.3px;font-size:65px;transform-origin:0 62.5px;transform:scale(0.911,0.989)">1</i>
<i class="g" style="left:194.6px;top:1387.3px;font-size:65px;transform-origin:0 62.5px;transform:scale(0.911,0.989)">1</i>
<i class="g" style="left:226.8px;top:1387.3px;font-size:65px;transform-origin:0 62.5px;transform:scale(0.961,0.989);-webkit-text-stroke:0.44px #fff">0</i>
<i class="g" style="left:261.8px;top:1387.3px;font-size:65px;transform-origin:0 62.5px;transform:scale(0.961,0.989);-webkit-text-stroke:0.44px #fff">0</i>
<i class="g" style="left:299.6px;top:1387.3px;font-size:65px;transform-origin:0 62.5px;transform:scale(0.911,0.989)">1</i>
<i class="g" style="left:1325.2px;top:1387.3px;font-size:65px;transform-origin:0 62.5px;transform:scale(0.911,0.989)">1</i>
<i class="g" style="left:1360.2px;top:1387.3px;font-size:65px;transform-origin:0 62.5px;transform:scale(0.911,0.989)">1</i>
<i class="g" style="left:1395.2px;top:1387.3px;font-size:65px;transform-origin:0 62.5px;transform:scale(0.911,0.989)">1</i>
<i class="g" style="left:1430.2px;top:1387.3px;font-size:65px;transform-origin:0 62.5px;transform:scale(0.911,0.989)">1</i>
<i class="g" style="left:1462.4px;top:1387.3px;font-size:65px;transform-origin:0 62.5px;transform:scale(0.961,0.989);-webkit-text-stroke:0.44px #fff">0</i>
<i class="g" style="left:1497.4px;top:1387.3px;font-size:65px;transform-origin:0 62.5px;transform:scale(0.961,0.989);-webkit-text-stroke:0.44px #fff">0</i>
<i class="g" style="left:1535.2px;top:1387.3px;font-size:65px;transform-origin:0 62.5px;transform:scale(0.911,0.989)">1</i>
<i class="g" style="left:89.6px;top:1467.3px;font-size:65px;transform-origin:0 62.5px;transform:scale(0.911,0.989)">1</i>
<i class="g" style="left:124.6px;top:1467.3px;font-size:65px;transform-origin:0 62.5px;transform:scale(0.911,0.989)">1</i>
<i class="g" style="left:156.8px;top:1467.3px;font-size:65px;transform-origin:0 62.5px;transform:scale(0.961,0.989);-webkit-text-stroke:0.44px #fff">0</i>
<i class="g" style="left:194.6px;top:1467.3px;font-size:65px;transform-origin:0 62.5px;transform:scale(0.911,0.989)">1</i>
<i class="g" style="left:229.6px;top:1467.3px;font-size:65px;transform-origin:0 62.5px;transform:scale(0.911,0.989)">1</i>
<i class="g" style="left:264.6px;top:1467.3px;font-size:65px;transform-origin:0 62.5px;transform:scale(0.911,0.989)">1</i>
<i class="g" style="left:299.6px;top:1467.3px;font-size:65px;transform-origin:0 62.5px;transform:scale(0.911,0.989)">1</i>
<i class="g" style="left:1325.2px;top:1467.3px;font-size:65px;transform-origin:0 62.5px;transform:scale(0.911,0.989)">1</i>
<i class="g" style="left:1360.2px;top:1467.3px;font-size:65px;transform-origin:0 62.5px;transform:scale(0.911,0.989)">1</i>
<i class="g" style="left:1392.4px;top:1467.3px;font-size:65px;transform-origin:0 62.5px;transform:scale(0.961,0.989);-webkit-text-stroke:0.44px #fff">0</i>
<i class="g" style="left:1430.2px;top:1467.3px;font-size:65px;transform-origin:0 62.5px;transform:scale(0.911,0.989)">1</i>
<i class="g" style="left:1465.2px;top:1467.3px;font-size:65px;transform-origin:0 62.5px;transform:scale(0.911,0.989)">1</i>
<i class="g" style="left:1500.2px;top:1467.3px;font-size:65px;transform-origin:0 62.5px;transform:scale(0.911,0.989)">1</i>
<i class="g" style="left:1535.2px;top:1467.3px;font-size:65px;transform-origin:0 62.5px;transform:scale(0.911,0.989)">1</i>
</body></html>
